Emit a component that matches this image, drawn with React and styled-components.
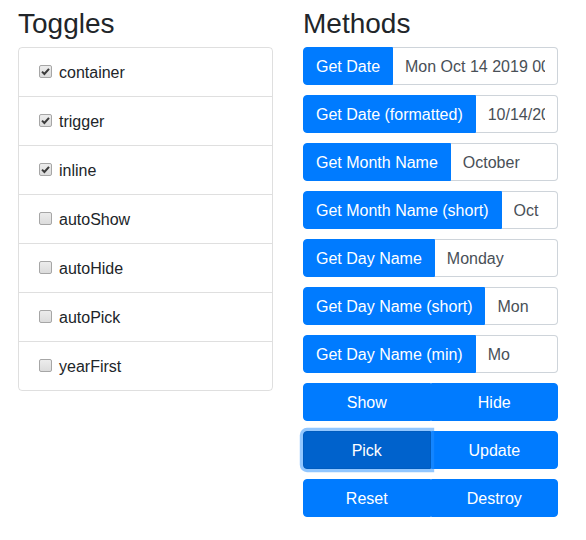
import React from 'react';
import styled, { createGlobalStyle } from 'styled-components';

const GlobalStyle = createGlobalStyle`
  * { box-sizing: border-box; }
  body {
    margin: 0;
    font-family: "Liberation Sans", Arial, sans-serif;
    font-size: 16px;
    line-height: 1.5;
    color: #212529;
    background: #fff;
  }
`;

const Page = styled.div`
  display: grid;
  grid-template-columns: 255px 255px;
  column-gap: 30px;
  padding: 7px 0 0 18px;
`;

const Column = styled.div`
  display: flex;
  flex-direction: column;
`;

const Heading = styled.h3`
  margin: 0 0 6px;
  font-size: 28px;
  font-weight: 500;
  line-height: 1.2;
`;

const ListGroup = styled.ul`
  list-style: none;
  margin: 0;
  padding: 0;
  border: 1px solid rgba(0, 0, 0, 0.125);
  border-radius: 4px;
`;

const ListItem = styled.li`
  padding: 13px 20px 11px;
  border-top: 1px solid rgba(0, 0, 0, 0.125);
  &:first-child { border-top: none; }
`;

const Label = styled.label`
  display: flex;
  align-items: center;
  gap: 7px;
  font-size: 16px;
  line-height: 24px;
`;

const HiddenInput = styled.input`
  position: absolute;
  opacity: 0;
  width: 0;
  height: 0;
`;

const Box = styled.span`
  display: inline-flex;
  align-items: center;
  justify-content: center;
  width: 13px;
  height: 13px;
  margin-top: -2px;
  border: 1px solid #a6a6a6;
  border-radius: 2px;
  background: linear-gradient(#ececec, #dcdcdc);
  svg { display: ${p => (p.$checked ? 'block' : 'none')}; }
`;

const InputGroup = styled.div`
  display: flex;
  height: 38px;
  margin-bottom: 10px;
`;

const PrimaryButton = styled.button`
  flex: ${p => (p.$half ? '1 1 0' : '0 0 auto')};
  font-family: inherit;
  font-size: 16px;
  line-height: 24px;
  padding: 7px 12px 5px;
  color: #fff;
  background: ${p => (p.$focus ? '#0062cc' : '#007bff')};
  border: 1px solid ${p => (p.$focus ? '#005cbf' : '#007bff')};
  border-radius: 0;
  white-space: nowrap;
  cursor: pointer;
  position: relative;
  z-index: ${p => (p.$focus ? 1 : 0)};
  box-shadow: ${p => (p.$focus ? '0 0 0 3.2px rgba(38, 143, 255, 0.5)' : 'none')};
  &:first-child { border-radius: 4px 0 0 4px; }
  &:last-child { border-radius: 0 4px 4px 0; }
`;

const Field = styled.input`
  flex: 1 1 auto;
  min-width: 0;
  font-family: inherit;
  font-size: 16px;
  line-height: 24px;
  padding: 7px 12px 5px;
  color: #495057;
  background: #fff;
  border: 1px solid #ced4da;
  border-left: none;
  border-radius: 0 4px 4px 0;
  outline: none;
`;

const toggles = [
  ['container', true],
  ['trigger', true],
  ['inline', true],
  ['autoShow', false],
  ['autoHide', false],
  ['autoPick', false],
  ['yearFirst', false],
];

const getters = [
  ['Get Date', 'Mon Oct 14 2019 00:00:00 GMT+0800'],
  ['Get Date (formatted)', '10/14/2019'],
  ['Get Month Name', 'October'],
  ['Get Month Name (short)', 'Oct'],
  ['Get Day Name', 'Monday'],
  ['Get Day Name (short)', 'Mon'],
  ['Get Day Name (min)', 'Mo'],
];

const pairs = [
  ['Show', 'Hide'],
  ['Pick', 'Update'],
  ['Reset', 'Destroy'],
];

function Check({ checked }) {
  return (
    <Box $checked={checked}>
      <svg width="9" height="9" viewBox="0 0 9 9">
        <path d="M1 4.6 L3.4 7 L8 1.8" fill="none" stroke="#3b3b3b" strokeWidth="2" />
      </svg>
    </Box>
  );
}

export default function App() {
  return (
    <>
      <GlobalStyle />
      <Page>
        <Column>
          <Heading>Toggles</Heading>
          <ListGroup>
            {toggles.map(([name, on]) => (
              <ListItem key={name}>
                <Label>
                  <HiddenInput type="checkbox" defaultChecked={on} />
                  <Check checked={on} />
                  {name}
                </Label>
              </ListItem>
            ))}
          </ListGroup>
        </Column>
        <Column>
          <Heading>Methods</Heading>
          {getters.map(([label, value]) => (
            <InputGroup key={label}>
              <PrimaryButton>{label}</PrimaryButton>
              <Field readOnly value={value} />
            </InputGroup>
          ))}
          {pairs.map(([a, b]) => (
            <InputGroup key={a}>
              <PrimaryButton $half $focus={a === 'Pick'}>{a}</PrimaryButton>
              <PrimaryButton $half>{b}</PrimaryButton>
            </InputGroup>
          ))}
        </Column>
      </Page>
    </>
  );
}
